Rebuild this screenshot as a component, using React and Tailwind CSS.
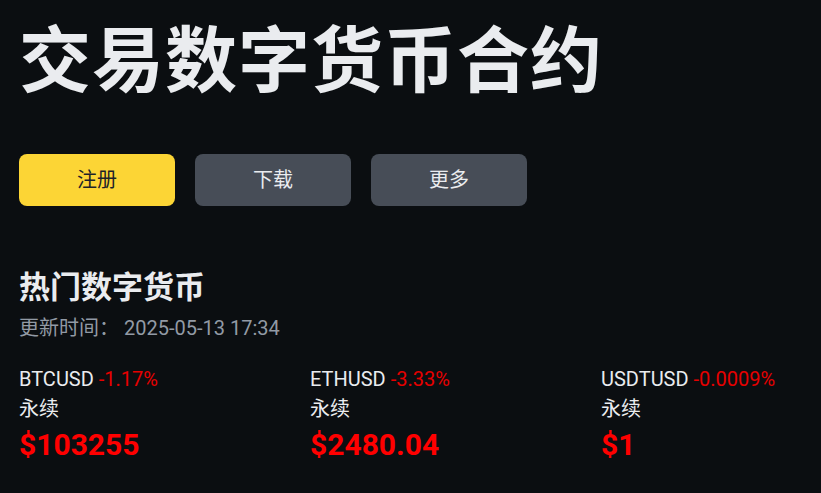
import React from "react";

const coins = [
  { sym: "BTCUSD", pct: "-1.17%", price: "$103255" },
  { sym: "ETHUSD", pct: "-3.33%", price: "$2480.04" },
  { sym: "USDTUSD", pct: "-0.0009%", price: "$1" },
];

export default function App() {
  return (
    <div
      className="min-h-[493px] w-[821px] overflow-hidden bg-[#0b0e11] pl-[19px] text-[#eaecef]"
      style={{ fontFamily: 'Roboto, "Noto Sans CJK SC", sans-serif' }}
    >
      <h1 className="pt-[17px] text-[72px] font-bold leading-[90px] tracking-[1px]">
        交易数字货币合约
      </h1>

      <div className="mt-[47px] flex gap-5">
        <button className="h-[52px] w-[156px] rounded-lg bg-[#fcd535] text-[20px] text-[#1e2329]">
          注册
        </button>
        <button className="h-[52px] w-[156px] rounded-lg bg-[#474d57] text-[20px] text-[#eaecef]">
          下载
        </button>
        <button className="h-[52px] w-[156px] rounded-lg bg-[#474d57] text-[20px] text-[#eaecef]">
          更多
        </button>
      </div>

      <h2 className="mt-[62px] text-[31px] font-bold leading-[40px]">热门数字货币</h2>
      <div className="mt-[8px] text-[20px] leading-[24px] text-[#929aa5]">
        更新时间：<span className="ml-[5px]">2025-05-13 17:34</span>
      </div>

      <div className="mt-[27px] grid grid-cols-[291px_291px_291px]">
        {coins.map((c) => (
          <div key={c.sym} className="flex flex-col">
            <div className="text-[20px] leading-[24px]">
              {c.sym} <span className="text-[#e60000]">{c.pct}</span>
            </div>
            <div className="mt-[5px] text-[20px] leading-[26px]">永续</div>
            <div className="mt-[5px] text-[30px] font-bold leading-[36px] text-[#ff0000]">
              {c.price}
            </div>
          </div>
        ))}
      </div>
    </div>
  );
}
